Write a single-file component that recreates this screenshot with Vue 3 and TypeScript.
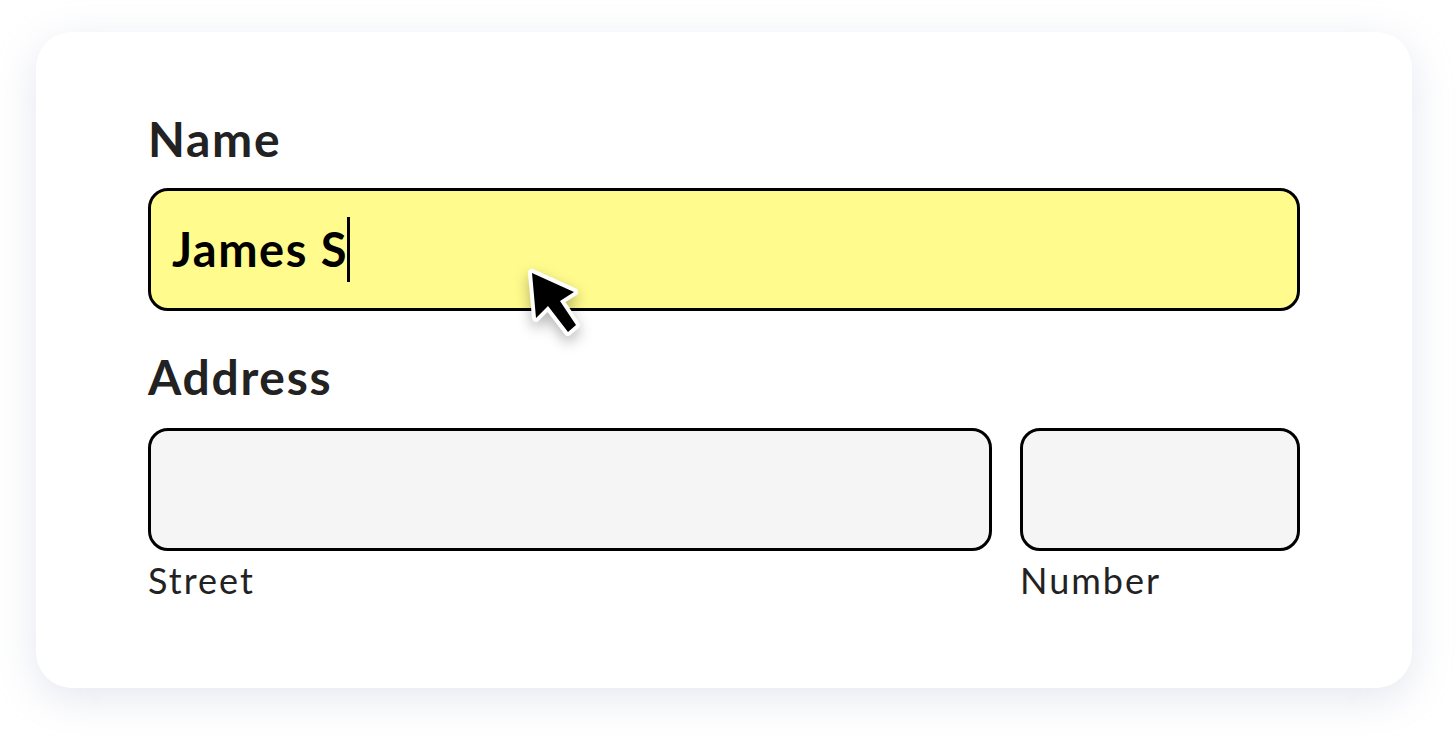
<script setup lang="ts">
const fields = [
  { id: 'street', label: 'Street' },
  { id: 'number', label: 'Number' },
]
</script>

<template>
  <main class="page">
    <form class="card">
      <h2 class="title">Name</h2>
      <div class="box box-active">
        <span class="value">James S</span><span class="caret"></span>
        <svg class="pointer" width="70" height="84" viewBox="0 0 70 84" aria-hidden="true">
          <path d="M12 13 L54 32 L40 41 L56 65 L48 72 L28 46 L16 58 Z" fill="#000" stroke="#fff" stroke-width="8" stroke-linejoin="round" paint-order="stroke" />
        </svg>
      </div>
      <h2 class="title title-second">Address</h2>
      <div class="row">
        <div v-for="f in fields" :key="f.id" :class="['col', f.id]">
          <div class="box"></div>
          <div class="sub">{{ f.label }}</div>
        </div>
      </div>
    </form>
  </main>
</template>

<style scoped>
.page {
  width: 1456px;
  height: 736px;
  box-sizing: border-box;
  padding: 32px 44px 48px 36px;
  background: #fff;
  font-family: "Lato", "Noto Sans", sans-serif;
}
.card {
  box-sizing: border-box;
  height: 656px;
  padding: 78px 112px 0;
  background: #fff;
  border-radius: 36px;
  box-shadow: 0 10px 40px rgba(170, 175, 205, 0.3);
}
.title {
  margin: 0;
  height: 60px;
  line-height: 58px;
  font-size: 48px;
  font-weight: 700;
  letter-spacing: 1.7px;
  color: #222;
}
.title-second {
  margin-top: 37px;
  margin-bottom: 20px;
}
.box {
  position: relative;
  box-sizing: border-box;
  height: 123px;
  background: #f5f5f5;
  border: 3px solid #000;
  border-radius: 20px;
}
.box-active {
  margin-top: 18px;
  display: flex;
  align-items: center;
  padding-left: 21px;
  background: #fffb8d;
}
.value {
  margin-bottom: 2px;
  font-size: 47px;
  font-weight: 700;
  letter-spacing: 1.5px;
  color: #000;
}
.caret {
  width: 3px;
  height: 65px;
  margin-left: -1px;
  background: #000;
}
.pointer {
  position: absolute;
  left: 369px;
  top: 69px;
  filter: drop-shadow(0 6px 7px rgba(0, 0, 0, 0.28));
}
.row {
  display: flex;
  gap: 28px;
}
.street {
  width: 844px;
}
.number {
  width: 280px;
}
.sub {
  margin-top: 7px;
  font-size: 36px;
  line-height: 44px;
  letter-spacing: 2px;
  color: #222;
}
</style>
